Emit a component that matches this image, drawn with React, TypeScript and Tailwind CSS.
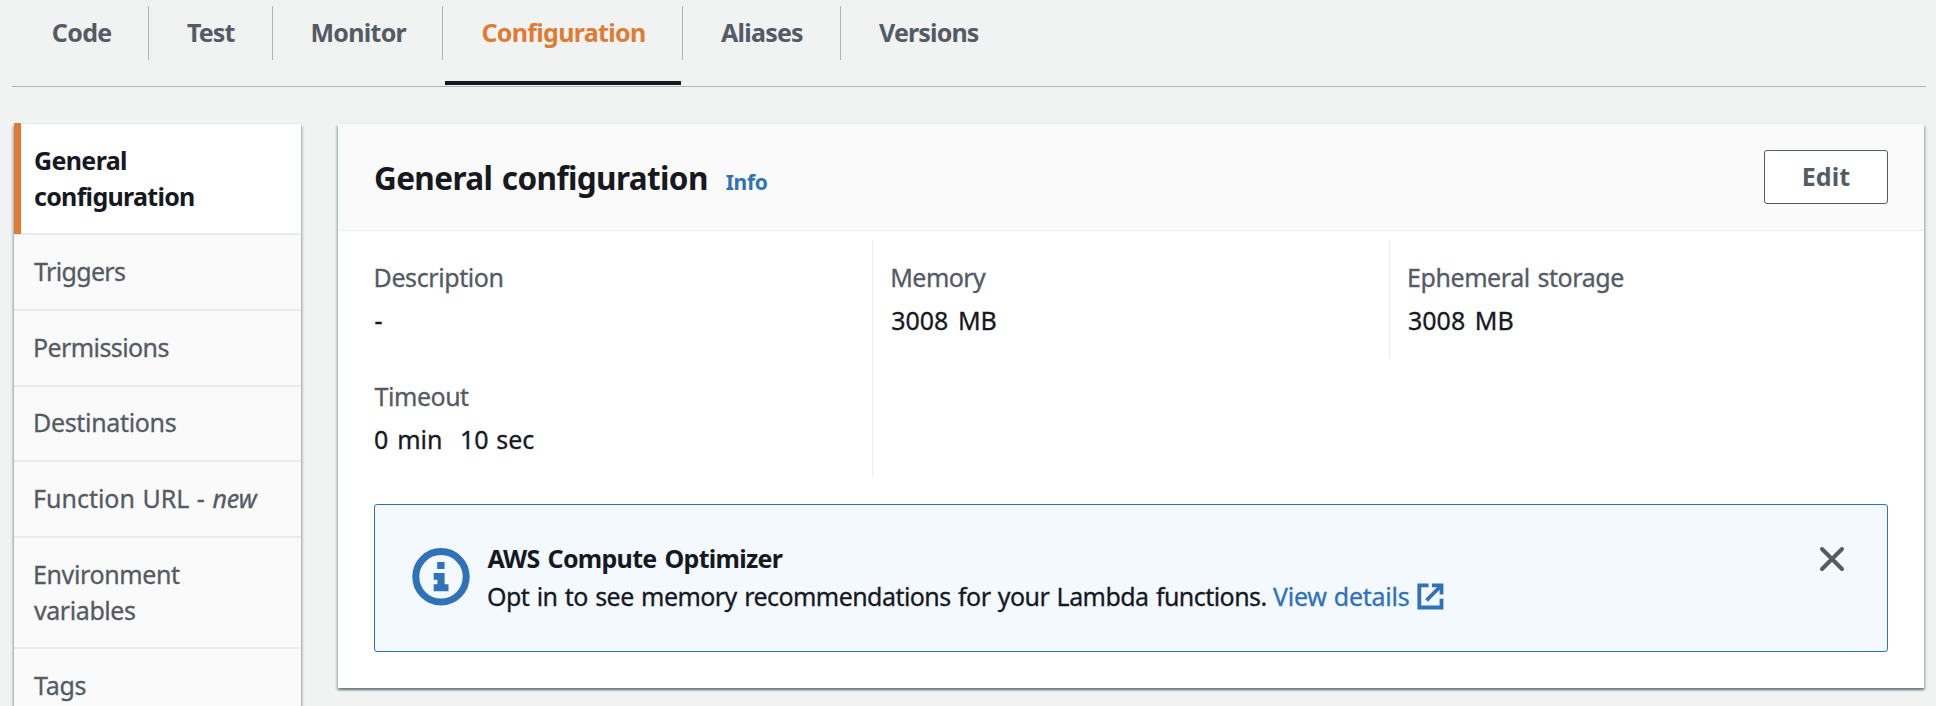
import React from 'react';

const tabs = [
  { label: 'Code', cls: 'w-[137px] pl-[39.7px] tracking-[-0.61px]', line: true },
  { label: 'Test', cls: 'w-[124px] pl-[38px] tracking-[-0.88px]', line: true },
  { label: 'Monitor', cls: 'w-[170px] pl-[37.5px] tracking-[-0.73px]', line: true },
  { label: 'Configuration', cls: 'w-[240px] pl-[38.4px] tracking-[-0.68px]', line: true, active: true },
  { label: 'Aliases', cls: 'w-[158px] pl-[38px] tracking-[-0.76px]', line: true },
  { label: 'Versions', cls: 'w-[160px] pl-[38px] tracking-[-0.85px]', line: false },
];

const shadow =
  'shadow-[0_-1px_0_#e9ebeb,0_2px_2px_rgba(0,28,36,0.38),2px_2px_2px_rgba(0,28,36,0.16),-2px_2px_2px_rgba(0,28,36,0.16)]';

function TabBar() {
  return (
    <nav className="ml-3 flex h-[87px] w-[1914px] border-b border-[#a9b7b7] font-bold text-[#545b64]">
      {tabs.map((t) => (
        <div key={t.label} className="flex flex-col justify-between pt-1.5">
          <a
            className={`block h-[54px] whitespace-nowrap border-[#a9b7b7] leading-[52px] ${t.cls} ${
              t.line ? 'border-r' : ''
            } ${t.active ? 'text-[#df7b33]' : ''}`}
          >
            {t.label}
          </a>
          {t.active && <span className="mb-px ml-0.5 h-1 w-[236px] bg-[#16191f]" />}
        </div>
      ))}
    </nav>
  );
}

function SideNav() {
  const item = 'border-b-2 border-[#eaebeb] whitespace-nowrap';
  return (
    <aside
      className={`h-[600px] w-[287px] shrink-0 bg-[#fafafa] leading-9 text-[#545b64] [-webkit-text-stroke:0.3px] ${shadow}`}
    >
      <div
        className={`${item} relative h-[111px] bg-white pt-[18px] pl-[20px] font-bold text-[#16191f] [-webkit-text-stroke:0px]`}
      >
        <span className="absolute -top-px left-0 h-[111px] w-[7px] bg-[#df7b33]" />
        <div className="tracking-[-0.64px]">General</div>
        <div className="tracking-[-0.71px]">configuration</div>
      </div>
      <div className={`${item} h-[76px] pt-[18px] pl-[20px] tracking-[-0.66px]`}>Triggers</div>
      <div className={`${item} h-[76px] pt-[18px] pl-[19px] tracking-[-0.59px]`}>Permissions</div>
      <div className={`${item} h-[75px] pt-[17px] pl-[19px] tracking-[-0.33px]`}>Destinations</div>
      <div className={`${item} h-[76px] pt-[18px] pl-[19px] [word-spacing:1px]`}>
        Function URL - <i className="tracking-[-0.1px]">new</i>
      </div>
      <div className={`${item} h-[111px] pt-[18px]`}>
        <div className="pl-[19px] tracking-[-0.38px]">Environment</div>
        <div className="pl-5 tracking-[-0.43px]">variables</div>
      </div>
      <div className="h-[75px] pt-[18px] pl-[20px] tracking-[-0.27px]">Tags</div>
    </aside>
  );
}

function InfoIcon() {
  return (
    <svg className="mt-[43px] ml-[37px] h-[58px] w-[58px] shrink-0" viewBox="0 0 58 58" fill="none">
      <circle cx="29" cy="28.8" r="25.2" stroke="#2f72b7" strokeWidth="7" />
      <path d="M25.2 14h7.4v7h-7.4zM21.7 25h10.9v11.2h3.9v7H21.7v-7h3.7v-4.4h-3.7z" fill="#2f72b7" />
    </svg>
  );
}

function ExternalIcon() {
  return (
    <svg className="mt-1.5 ml-[8px] h-[27px] w-[27px]" viewBox="0 0 27 27" fill="none" stroke="#2f72b7" strokeWidth="3.8">
      <path d="M11.5 2.3H2.3v22.2h22.2v-8.8" />
      <path d="M15 2.3h9.5v9.2M24.3 2.5L9.5 17.3" />
    </svg>
  );
}

export default function App() {
  return (
    <div className="h-[706px] w-[1936px] overflow-hidden bg-[#f1f3f3] font-['Noto_Sans',sans-serif] text-[25px] text-[#16191f]">
      <TabBar />
      <div className="mt-[37px] ml-3.5 flex items-start gap-[37px]">
        <SideNav />
        <main className={`h-[564px] w-[1586px] bg-white ${shadow}`}>
          <header className="flex h-[107px] items-start border-b border-[#eaeded] bg-[#fafafa]">
            <div className="flex items-baseline whitespace-nowrap pt-[31px] pl-9">
              <h1 className="w-[351.7px] text-[31.5px] leading-[46px] font-bold tracking-[-0.62px] [word-spacing:2px]">
                General configuration
              </h1>
              <a className="text-[21px] leading-[30px] font-bold tracking-[-0.3px] text-[#2f72b7]">Info</a>
            </div>
            <button className="mt-[26px] mr-9 ml-auto h-[54px] w-[124px] rounded-[3px] border border-[#545b64] bg-white font-bold tracking-[0.14px] text-[#545b64]">
              Edit
            </button>
          </header>
          <section className="grid h-[246px] grid-cols-[534px_517px_1fr] items-start whitespace-nowrap pt-[9px] leading-9 [-webkit-text-stroke:0.3px]">
            <div className="pl-[35.6px]">
              <div className="h-[119px] pt-[19px]">
                <div className="tracking-[-0.41px] text-[#545b64]">Description</div>
                <div className="mt-[7px] pl-px">-</div>
              </div>
              <div className="h-[118px] pt-[19px]">
                <div className="pl-[1px] tracking-[-0.48px] text-[#545b64]">Timeout</div>
                <div className="mt-[7px] flex pl-[0.4px]">
                  <span className="w-[86px] [word-spacing:2.4px]">0 min</span>
                  <span className="tracking-[-0.1px] [word-spacing:1.5px]">10 sec</span>
                </div>
              </div>
            </div>
            <div className="h-[237px] border-l border-[#eaeded] pt-[19px] pl-[17.2px]">
              <div className="tracking-[-0.54px] text-[#545b64]">Memory</div>
              <div className="mt-[7px] pl-px [word-spacing:3px]">3008 MB</div>
            </div>
            <div className="h-[119px] border-l border-[#eaeded] pt-[19px] pl-[17px]">
              <div className="tracking-[-0.42px] text-[#545b64] [word-spacing:1.5px]">Ephemeral storage</div>
              <div className="mt-[7px] pl-px [word-spacing:3px]">3008 MB</div>
            </div>
          </section>
          <section className="mt-[27px] ml-9 flex h-[148px] w-[1514px] rounded-[3px] border border-[#2f72b7] bg-[#f3f9fe]">
            <InfoIcon />
            <div className="mt-[34px] ml-[17px] whitespace-nowrap leading-[38px]">
              <div className="pl-[0.5px] font-bold tracking-[-0.71px] [word-spacing:2.2px]">AWS Compute Optimizer</div>
              <div className="flex [-webkit-text-stroke:0.3px]">
                <span className="w-[786px] tracking-[-0.55px] [word-spacing:1.4px]">
                  Opt in to see memory recommendations for your Lambda functions.
                </span>
                <a className="flex tracking-[-0.27px] text-[#2f72b7] [word-spacing:1px]">
                  View details
                  <ExternalIcon />
                </a>
              </div>
            </div>
            <svg className="mt-[41px] mr-[42px] ml-auto h-[26px] w-[26px]" viewBox="0 0 26 26" stroke="#545b64" strokeWidth="4" strokeLinecap="round">
              <path d="M3 3l20 20M23 3L3 23" />
            </svg>
          </section>
        </main>
      </div>
    </div>
  );
}
